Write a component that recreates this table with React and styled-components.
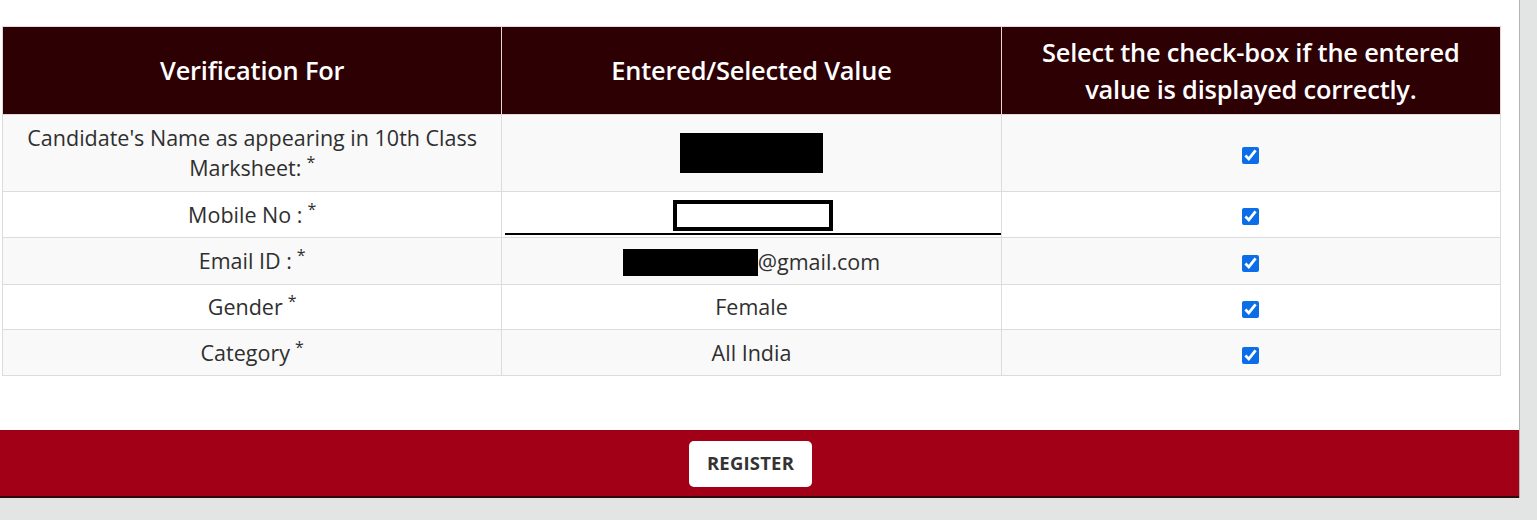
import React from "react";
import styled, { createGlobalStyle } from "styled-components";

const Global = createGlobalStyle`
  html, body { margin: 0; padding: 0; }
  body {
    background: #e3e4e4;
    font-family: "Open Sans", "Noto Sans", sans-serif;
    color: #333;
  }
`;

const Panel = styled.div`
  width: 1520px;
  background: #fff;
  border-right: 1px solid #b4b4b4;
  padding-top: 26px;
  box-sizing: border-box;
  display: flex;
  flex-direction: column;
`;

const TableWrap = styled.div`
  padding-left: 2px;
`;

const Table = styled.table`
  width: 1499px;
  border-collapse: collapse;
  table-layout: fixed;
`;

const Th = styled.th`
  background: #2d0104;
  color: #fff;
  font-size: 25.4px;
  font-weight: 600;
  line-height: 37px;
  height: 88px;
  padding: 6px 10px;
  box-sizing: border-box;
  border: 1px solid #e6d6d6;
  border-top-color: #ead9d9;
  text-align: center;
  vertical-align: middle;
  letter-spacing: -0.2px;
`;

const Tr = styled.tr`
  background: ${(p) => (p.$striped ? "#f9f9f9" : "#fff")};
`;

const Td = styled.td`
  border: 1px solid #dcdcdc;
  padding: ${(p) => (p.$tight ? "0" : "7px 10px")};
  height: ${(p) => p.$h}px;
  box-sizing: border-box;
  text-align: center;
  vertical-align: middle;
  font-size: 21.5px;
  line-height: 30px;
  color: #2f2f2f;
`;

const Star = styled.sup`
  font-size: 16px;
  line-height: 0;
  vertical-align: 8px;
  margin-left: 5px;
`;

const Redacted = styled.span`
  display: inline-block;
  vertical-align: middle;
  width: ${(p) => p.$w}px;
  height: ${(p) => p.$h}px;
  background: ${(p) => (p.$hollow ? "#fff" : "#000")};
  border: ${(p) => (p.$hollow ? "4px solid #000" : "none")};
  box-sizing: border-box;
`;

const InputLine = styled.div`
  margin-left: 3px;
  height: 41px;
  border-bottom: 2px solid #000;
  display: flex;
  align-items: center;
  justify-content: center;
  box-sizing: border-box;
  padding-top: 4px;
`;

const EmailText = styled.span`
  vertical-align: middle;
`;

const Check = styled.input.attrs({ type: "checkbox" })`
  width: 17px;
  height: 17px;
  margin: 0;
  vertical-align: middle;
  accent-color: #0b6ee8;
`;

const Footer = styled.div`
  margin-top: 54px;
  height: 68px;
  background: #a10016;
  border-bottom: 2px solid #2c0a0a;
  display: flex;
  align-items: center;
  justify-content: center;
  box-sizing: border-box;
`;

const Button = styled.button`
  background: #fff;
  border: none;
  border-radius: 5px;
  width: 123px;
  height: 46px;
  padding: 0 0 4px;
  margin-left: -18px;
  margin-top: 2px;
  font-family: "Open Sans", sans-serif;
  font-size: 18.5px;
  font-weight: 700;
  color: #333;
  letter-spacing: 0.2px;
  cursor: pointer;
`;

const rows = [
  {
    label: (
      <>
        Candidate's Name as appearing in 10th Class
        <br />
        Marksheet:<Star>*</Star>
      </>
    ),
    value: <Redacted $w={143} $h={40} />,
    h: 77,
  },
  {
    label: (
      <>
        Mobile No :<Star>*</Star>
      </>
    ),
    value: (
      <InputLine>
        <Redacted $w={160} $h={31} $hollow />
      </InputLine>
    ),
    tight: true,
    h: 46,
  },
  {
    label: (
      <>
        Email ID :<Star>*</Star>
      </>
    ),
    value: (
      <>
        <Redacted $w={135} $h={27} />
        <EmailText>@gmail.com</EmailText>
      </>
    ),
    h: 46,
  },
  {
    label: (
      <>
        Gender<Star>*</Star>
      </>
    ),
    value: "Female",
    h: 45,
  },
  {
    label: (
      <>
        Category<Star>*</Star>
      </>
    ),
    value: "All India",
    h: 46,
  },
];

export default function App() {
  return (
    <>
      <Global />
      <Panel>
        <TableWrap>
          <Table>
            <thead>
              <tr>
                <Th>Verification For</Th>
                <Th>Entered/Selected Value</Th>
                <Th>
                  Select the check-box if the entered
                  <br />
                  value is displayed correctly.
                </Th>
              </tr>
            </thead>
            <tbody>
              {rows.map((r, i) => (
                <Tr key={i} $striped={i % 2 === 0}>
                  <Td $h={r.h}>{r.label}</Td>
                  <Td $h={r.h} $tight={r.tight}>
                    {r.value}
                  </Td>
                  <Td $h={r.h}>
                    <Check defaultChecked />
                  </Td>
                </Tr>
              ))}
            </tbody>
          </Table>
        </TableWrap>
        <Footer>
          <Button>REGISTER</Button>
        </Footer>
      </Panel>
    </>
  );
}
